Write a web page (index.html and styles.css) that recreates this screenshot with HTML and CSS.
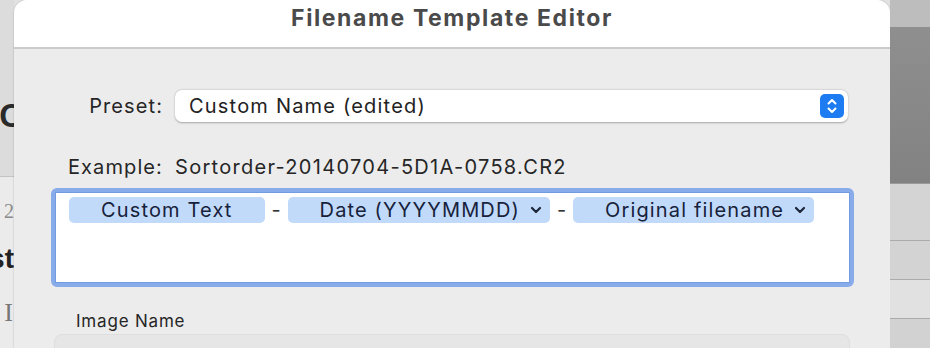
FILE: index.html
```html
<!DOCTYPE html>
<html lang="en">
<head>
  <meta charset="UTF-8" />
  <meta name="viewport" content="width=device-width, initial-scale=1" />
  <title>Filename Template Editor</title>
  <link rel="stylesheet" href="styles.css">
</head>
<body>

  <!-- Fenêtre derrière, côté gauche -->
  <div class="backdrop-left">
    <div class="bl-top">
      <span class="bl-heading">C</span>
    </div>
    <div class="bl-bottom">
      <span class="bl-num">2</span>
      <span class="bl-bold">st</span>
      <span class="bl-serif">I</span>
    </div>
  </div>

  <!-- Feuille de dialogue -->
  <div class="sheet">
    <div class="titlebar">Filename Template Editor</div>

    <div class="sheet-body">
      <div class="form-row preset-row">
        <label class="form-label">Preset:</label>
        <div class="popup">
          <span>Custom Name (edited)</span>
          <span class="stepper">
            <svg width="24" height="24" viewBox="0 0 24 24">
              <path d="M8.5 9.5 L12 6 L15.5 9.5" fill="none" stroke="#fff" stroke-width="2" stroke-linecap="round" stroke-linejoin="round"/>
              <path d="M8.5 14.5 L12 18 L15.5 14.5" fill="none" stroke="#fff" stroke-width="2" stroke-linecap="round" stroke-linejoin="round"/>
            </svg>
          </span>
        </div>
      </div>

      <div class="form-row example-row">
        <span class="form-label">Example:</span>
        <span class="example-value">Sortorder-20140704-5D1A-0758.CR2</span>
      </div>

      <div class="token-field">
        <div class="token-inner">
          <span class="token">Custom Text</span>
          <span class="token-sep">-</span>
          <span class="token has-menu">Date (YYYYMMDD)
            <svg class="chev" width="12" height="8" viewBox="0 0 12 8"><path d="M2 2 L6 6 L10 2" fill="none" stroke="#1c2537" stroke-width="2.2" stroke-linecap="round" stroke-linejoin="round"/></svg>
          </span>
          <span class="token-sep">-</span>
          <span class="token has-menu">Original filename
            <svg class="chev" width="12" height="8" viewBox="0 0 12 8"><path d="M2 2 L6 6 L10 2" fill="none" stroke="#1c2537" stroke-width="2.2" stroke-linecap="round" stroke-linejoin="round"/></svg>
          </span>
        </div>
      </div>

      <div class="group-label">Image Name</div>
      <div class="group-box"></div>
    </div>
  </div>

  <!-- Fenêtre derrière, côté droit -->
  <div class="backdrop-right">
    <div class="br-row br-light"></div>
    <div class="br-row br-dark"></div>
    <div class="br-row br-a"></div>
    <div class="br-row br-b"></div>
    <div class="br-row br-c"></div>
    <div class="br-row br-d"></div>
  </div>

</body>
</html>
```

FILE: styles.css
```css
body {
  margin: 0;
  width: 930px;
  height: 348px;
  overflow: hidden;
  display: flex;
  font-family: Inter, "Noto Sans", sans-serif;
  background: #e2e2e2;
}

/* Fond gauche */
.backdrop-left {
  width: 14px;
  flex-shrink: 0;
  overflow: hidden;
  display: flex;
  flex-direction: column;
  box-shadow: inset -2px 0 3px rgba(0,0,0,0.12);
}
.bl-top {
  height: 176px;
  background: #dcdcdc;
  border-bottom: 1px solid #c4c4c4;
  display: flex;
  align-items: flex-start;
  justify-content: flex-end;
}
.bl-heading {
  margin-top: 97px;
  margin-right: -9px;
  font: bold 33px "Liberation Sans", sans-serif;
  color: #2a2a2a;
}
.bl-bottom {
  flex: 1;
  background: #ebebeb;
  display: flex;
  flex-direction: column;
  align-items: flex-end;
}
.bl-num {
  margin-top: 23px;
  font: 20px "Liberation Serif", serif;
  color: #8a8a8a;
}
.bl-bold {
  margin-top: 20px;
  font: bold 28px "Liberation Sans", sans-serif;
  color: #222;
}
.bl-serif {
  margin-top: 23px;
  margin-right: 1px;
  font: 26px "Liberation Serif", serif;
  color: #777;
}

/* Feuille */
.sheet {
  width: 876px;
  flex-shrink: 0;
  background: #ececec;
  border-radius: 13px 13px 0 0;
  overflow: hidden;
  box-shadow: 0 0 2px rgba(0,0,0,0.25);
}
.titlebar {
  height: 47px;
  background: #fff;
  border-bottom: 2px solid #cbcbcb;
  text-align: center;
  font-size: 23px;
  font-weight: 700;
  letter-spacing: 1.6px;
  color: #4a4a4a;
  line-height: 37px;
}
.sheet-body {
  padding-top: 41px;
}
.form-row {
  display: grid;
  grid-template-columns: 135px 1fr;
  column-gap: 12px;
  align-items: center;
  padding: 0 42px 0 14px;
}
.form-label {
  text-align: right;
  font-size: 20px;
  letter-spacing: 1.1px;
  color: #262626;
}
.popup {
  height: 32px;
  background: #fff;
  border-radius: 7px;
  box-shadow: 0 0.5px 2px rgba(0,0,0,0.3);
  display: flex;
  align-items: center;
  justify-content: space-between;
  padding: 0 4px 0 14px;
  font-size: 20px;
  letter-spacing: 1.2px;
  color: #222;
}
.stepper {
  width: 24px;
  height: 24px;
  border-radius: 5px;
  background: #1e7cf3;
  display: flex;
}
.example-row {
  margin-top: 33px;
  height: 22px;
}
.example-value {
  font-size: 20px;
  letter-spacing: 1.3px;
  color: #262626;
}

/* Champ de jetons */
.token-field {
  margin: 11px 36px 0 37px;
  border: 4px solid #88abea;
  border-radius: 6px;
  height: 91px;
}
.token-inner {
  height: 100%;
  box-sizing: border-box;
  background: #fff;
  border: 1px solid #739be2;
  padding: 4px 0 0 13px;
  display: flex;
  align-items: flex-start;
}
.token {
  height: 26px;
  border-radius: 5px;
  background: #c1dafa;
  display: inline-flex;
  align-items: center;
  padding: 0 32px;
  font-size: 20px;
  letter-spacing: 1.15px;
  color: #17223a;
}
.token.has-menu {
  padding-right: 8px;
}
.chev {
  margin-left: 10px;
}
.token-sep {
  width: 23px;
  text-align: center;
  font-size: 20px;
  line-height: 26px;
  color: #333;
}

.group-label {
  margin: 24px 0 0 62px;
  font-size: 17px;
  letter-spacing: 0.8px;
  color: #262626;
}
.group-box {
  margin: 3px 40px 0 40px;
  height: 40px;
  background: #e6e6e6;
  border: 1px solid #dedede;
  border-radius: 8px;
}

/* Fond droit */
.backdrop-right {
  flex: 1;
  display: flex;
  flex-direction: column;
  box-shadow: inset 3px 0 3px rgba(0,0,0,0.18);
}
.br-row {
  border-bottom: 1px solid #ababab;
}
.br-light { height: 27px; background: #bdbdbd; border-bottom: none; }
.br-dark { height: 156px; background: linear-gradient(#8f8f8f, #828282); border-bottom: 1px solid #9a9a9a; }
.br-a { height: 56px; background: #d4d4d4; }
.br-b { height: 38px; background: #d3d3d3; }
.br-c { height: 38px; background: #e1e1e1; }
.br-d { flex: 1; background: #d2d2d2; border-bottom: none; }
```
